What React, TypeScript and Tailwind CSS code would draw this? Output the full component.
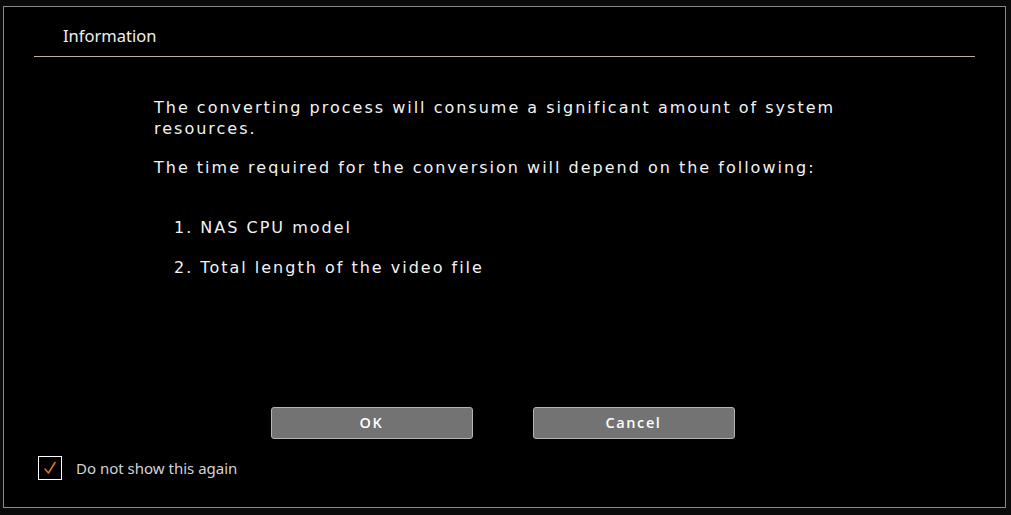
import React from "react";

export default function App() {
  return (
    <div className="w-[1011px] h-[515px] bg-[#0a0a0a] pt-[6px] pl-[3px]">
      <div className="w-[1003px] h-[502px] border border-[#8a8a8a] bg-black flex flex-col">
        <div className="px-[30px]">
          <div
            className="h-[50px] pt-[19px] pl-[29px] text-[16.5px] leading-[20px] text-[#f0f0f0] border-b border-[#c4aca4]"
            style={{ fontFamily: '"Noto Sans", "Open Sans", sans-serif' }}
          >
            Information
          </div>
        </div>
        <div
          className="pl-[150px] pt-[40px] text-[16px] leading-[21px] tracking-[2px] text-[#f2f2f2] h-[350px]"
          style={{ fontFamily: '"DejaVu Sans", Verdana, sans-serif' }}
        >
          <p className="w-[740px]">
            The converting process will consume a significant amount of system resources.
          </p>
          <p className="mt-[18px]">The time required for the conversion will depend on the following:</p>
          <p className="mt-[39px] pl-[20px]">1. NAS CPU model</p>
          <p className="mt-[19px] pl-[20px]">2. Total length of the video file</p>
        </div>
        <div className="flex justify-center gap-[60px] pr-[4px]">
          <button
            className="w-[202px] h-[32px] rounded-[3px] bg-[#737373] border border-[#b5b5b5] text-white text-[14.5px] font-semibold tracking-[1.6px]"
            style={{ fontFamily: '"Open Sans", "Noto Sans", sans-serif' }}
          >
            OK
          </button>
          <button
            className="w-[202px] h-[32px] rounded-[3px] bg-[#737373] border border-[#b5b5b5] text-white text-[14.5px] font-semibold tracking-[1.6px]"
            style={{ fontFamily: '"Open Sans", "Noto Sans", sans-serif' }}
          >
            Cancel
          </button>
        </div>
        <div className="flex items-center pl-[34px] mt-[17px]">
          <div className="w-[24px] h-[24px] border border-white flex items-center justify-center">
            <svg width="14" height="14" viewBox="0 0 14 14">
              <path d="M2 8 L5.5 12 L12 1.5" fill="none" stroke="#e07020" strokeWidth="1.6" strokeLinecap="round" strokeLinejoin="round" />
            </svg>
          </div>
          <span
            className="ml-[14px] text-[15px] text-[#d4d4d4]"
            style={{ fontFamily: '"Noto Sans", "Open Sans", sans-serif' }}
          >
            Do not show this again
          </span>
        </div>
      </div>
    </div>
  );
}
